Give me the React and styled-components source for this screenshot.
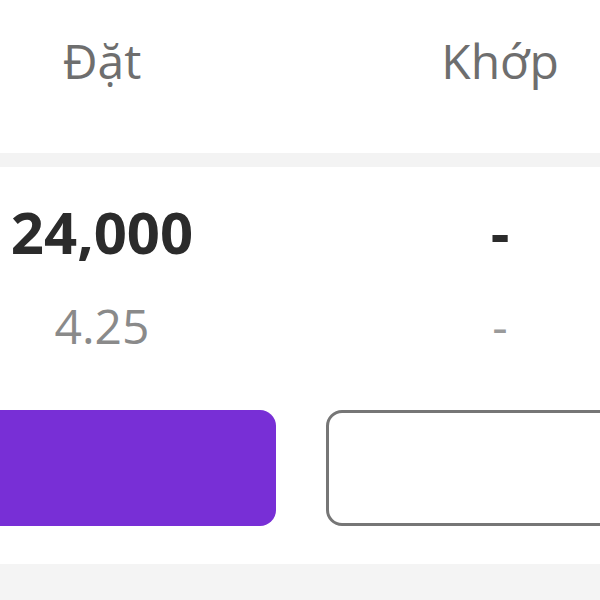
import React from "react"
import styled, { createGlobalStyle } from "styled-components"

const GlobalStyle = createGlobalStyle`
  html, body {
    margin: 0;
    padding: 0;
    background: #ffffff;
    overflow: hidden;
  }
  body {
    font-family: "Open Sans", "Noto Sans", sans-serif;
  }
`

export default function App() {
    const columns = [
        { title: "Đặt", value: "24,000", sub: "4.25", filled: true },
        { title: "Khớp", value: "-", sub: "-", filled: false },
    ]
    return (
    <>
        <GlobalStyle />
        <Screen>
            <Header>
                {columns.map(c => (
                    <HeadCell key={c.title}>{c.title}</HeadCell>
                ))}
            </Header>
            <Divider />
            <Body>
                {columns.map(c => (
                    <Column key={c.title}>
                        <Value>{c.value}</Value>
                        <Sub $dash={c.sub === "-"}>{c.sub}</Sub>
                        <Action $filled={c.filled} />
                    </Column>
                ))}
            </Body>
            <Footer />
        </Screen>
    </>
    )
}

const Screen = styled.div`
    width: 600px;
    height: 600px;
    overflow: hidden;
    display: flex;
    flex-direction: column;
`
const Header = styled.div`
    display: grid;
    grid-template-columns: 398px 398px;
    margin-left: -97px;
    padding: 29px 0 60px;
`
const HeadCell = styled.div`
    text-align: center;
    font-size: 48px;
    line-height: 64px;
    color: #6e6e6e;
`
const Divider = styled.div`
    height: 14px;
    background: #f3f3f3;
    flex-shrink: 0;
`
const Body = styled.div`
    display: grid;
    grid-template-columns: 398px 398px;
    margin-left: -97px;
    padding-top: 30px;
`
const Column = styled.div`
    display: flex;
    flex-direction: column;
    align-items: center;
    padding: 0 25px;
`
const Value = styled.div`
    font-size: 58px;
    font-weight: 700;
    line-height: 70px;
    color: #2b2b2b;
`
const Sub = styled.div`
    margin-top: 27px;
    font-size: 48px;
    line-height: 64px;
    color: ${p => (p.$dash ? "#9a9a9a" : "#8a8a8a")};
`
const Action = styled.button`
    align-self: stretch;
    margin-top: 52px;
    height: 116px;
    border-radius: 16px;
    box-sizing: border-box;
    background: ${p => (p.$filled ? "#782fd6" : "#ffffff")};
    border: ${p => (p.$filled ? "none" : "3px solid #767676")};
`
const Footer = styled.div`
    margin-top: 38px;
    flex: 1;
    background: #f4f4f4;
`
